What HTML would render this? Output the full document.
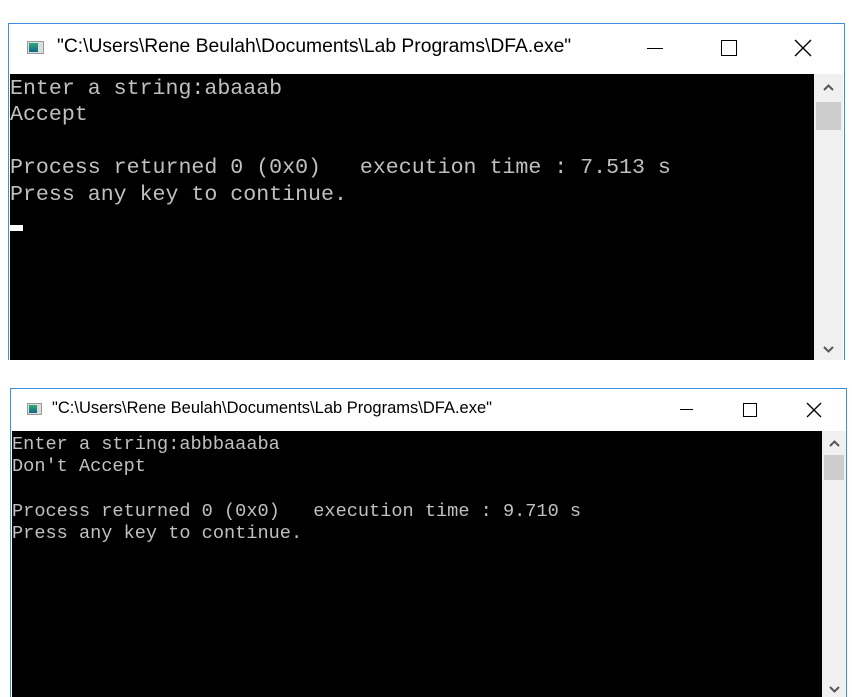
<!DOCTYPE html>
<html><head><style>
*{margin:0;padding:0;box-sizing:border-box}
body{width:852px;height:697px;background:#fff;position:relative;overflow:hidden;font-family:"Liberation Sans",sans-serif}
.win{position:absolute;border:1px solid #3c8ee0;background:#fff}
.title{position:absolute;white-space:nowrap;color:#000;transform-origin:0 50%}
.con{position:absolute;background:#000;color:#c0c0c0;font-family:"Liberation Mono",monospace;white-space:pre}
.sb{position:absolute;background:#f0f0f0}
.thumb{position:absolute;background:#cdcdcd;left:2px;right:2px}
.ico{position:absolute;border:1px solid #999;background:#ddd}
.ico i{position:absolute;top:1px;bottom:1px;left:1px;width:60%;background:linear-gradient(#3a7,#168)}
.btn{position:absolute;color:#000}
</style></head><body>

<div class="win" style="left:8px;top:23px;width:837px;height:337px;border-bottom:none"></div>
<div class="ico" style="left:27px;top:41px;width:17px;height:13px"><i></i></div>
<div class="title" style="left:57px;top:36px;font-size:19.3px;transform:scaleX(1.0)">"C:\Users\Rene Beulah\Documents\Lab Programs\DFA.exe"</div>
<div class="btn" style="left:647px;top:48px;width:16px;height:1px;background:#000"></div>
<div class="btn" style="left:721px;top:40px;width:16px;height:16px;border:1.3px solid #000"></div>
<svg style="position:absolute;left:794px;top:39px" width="18" height="18"><path d="M1 1L17 17M17 1L1 17" stroke="#000" stroke-width="1.4"/></svg>
<div class="con" style="left:10px;top:74px;width:804px;height:286px;font-size:21.6px;line-height:26.4px;padding-top:2px">Enter a string:abaaab
Accept

Process returned 0 (0x0)   execution time : 7.513 s
Press any key to continue.</div>
<div style="position:absolute;left:10px;top:225px;width:13px;height:6px;background:#fff"></div>
<div class="sb" style="left:814px;top:74px;width:29px;height:286px"><div class="thumb" style="top:28px;height:28px"></div>
<svg style="position:absolute;left:9px;top:10px" width="11" height="7"><path d="M1 6L5.5 1.5L10 6" stroke="#555" stroke-width="2" fill="none"/></svg>
<svg style="position:absolute;left:9px;top:272px" width="11" height="7"><path d="M1 1L5.5 5.5L10 1" stroke="#555" stroke-width="2" fill="none"/></svg></div>

<div class="win" style="left:10px;top:388px;width:837px;height:309px;border-bottom:none"></div>
<div class="ico" style="left:27px;top:403px;width:15px;height:12px"><i></i></div>
<div class="title" style="left:52px;top:399px;font-size:16.5px;transform:scaleX(1.0)">"C:\Users\Rene Beulah\Documents\Lab Programs\DFA.exe"</div>
<div class="btn" style="left:680px;top:409px;width:13px;height:1px;background:#000"></div>
<div class="btn" style="left:743px;top:403px;width:14px;height:14px;border:1.2px solid #000"></div>
<svg style="position:absolute;left:806px;top:402px" width="16" height="16"><path d="M1 1L15 15M15 1L1 15" stroke="#000" stroke-width="1.3"/></svg>
<div class="con" style="left:12px;top:431px;width:810px;height:266px;font-size:18.6px;line-height:22.3px;padding-top:3px">Enter a string:abbbaaaba
Don't Accept

Process returned 0 (0x0)   execution time : 9.710 s
Press any key to continue.</div>
<div class="sb" style="left:822px;top:431px;width:24px;height:266px"><div class="thumb" style="top:24px;height:25px"></div>
<svg style="position:absolute;left:7px;top:9px" width="11" height="7"><path d="M1 6L5.5 1.5L10 6" stroke="#555" stroke-width="2" fill="none"/></svg>
<svg style="position:absolute;left:7px;top:255px" width="11" height="7"><path d="M1 1L5.5 5.5L10 1" stroke="#555" stroke-width="2" fill="none"/></svg></div>
</body></html>
